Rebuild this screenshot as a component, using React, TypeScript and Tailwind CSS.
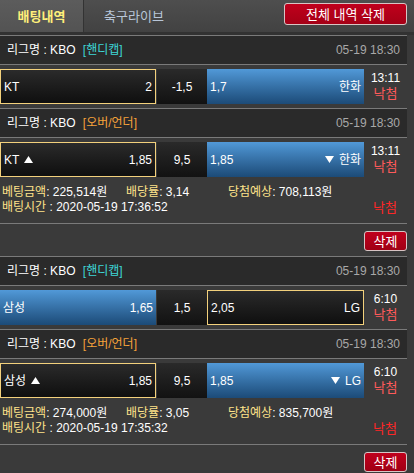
import React from 'react';

type Side = { name: string; odds: string; arrow?: 'up' | 'down'; blue: boolean };
type Game = { kind: 'handicap' | 'ou'; date: string; left: Side; mid: string; right: Side; time: string };
type Bet = { games: Game[]; amount: string; rate: string; expect: string; at: string };

const bets: Bet[] = [
  {
    games: [
      { kind: 'handicap', date: '05-19 18:30', left: { name: 'KT', odds: '2', blue: false }, mid: '-1,5', right: { name: '한화', odds: '1,7', blue: true }, time: '13:11' },
      { kind: 'ou', date: '05-19 18:30', left: { name: 'KT', odds: '1,85', arrow: 'up', blue: false }, mid: '9,5', right: { name: '한화', odds: '1,85', arrow: 'down', blue: true }, time: '13:11' },
    ],
    amount: '225,514원',
    rate: '3,14',
    expect: '708,113원',
    at: '2020-05-19 17:36:52',
  },
  {
    games: [
      { kind: 'handicap', date: '05-19 18:30', left: { name: '삼성', odds: '1,65', blue: true }, mid: '1,5', right: { name: 'LG', odds: '2,05', blue: false }, time: '6:10' },
      { kind: 'ou', date: '05-19 18:30', left: { name: '삼성', odds: '1,85', arrow: 'up', blue: false }, mid: '9,5', right: { name: 'LG', odds: '1,85', arrow: 'down', blue: true }, time: '6:10' },
    ],
    amount: '274,000원',
    rate: '3,05',
    expect: '835,700원',
    at: '2020-05-19 17:35:32',
  },
];

const boxDark = 'border border-[#f3d17c] bg-gradient-to-b from-[#2b2b2b] to-[#0f0f0f]';
const boxBlue = 'bg-gradient-to-b from-[#5199d8] to-[#1c4b78]';

function Arrow({ dir }: { dir: 'up' | 'down' }) {
  return (
    <svg width="9" height="7" viewBox="0 0 9 7" className="inline-block">
      {dir === 'up' ? <polygon points="4.5,0 9,7 0,7" fill="#fff" /> : <polygon points="0,0 9,0 4.5,7" fill="#fff" />}
    </svg>
  );
}

function Pick({ side, right }: { side: Side; right?: boolean }) {
  const cls = side.blue ? boxBlue : boxDark;
  return (
    <div className={`h-[35px] flex items-center justify-between px-[3px] text-white ${cls} ${right ? 'w-[157px]' : 'w-[156px]'}`}>
      {right ? (
        <>
          <span>{side.odds}</span>
          <span className="flex items-center gap-[5px]">
            {side.arrow && <Arrow dir={side.arrow} />}
            {side.name}
          </span>
        </>
      ) : (
        <>
          <span className="flex items-center gap-[5px]">
            {side.name}
            {side.arrow && <Arrow dir={side.arrow} />}
          </span>
          <span>{side.odds}</span>
        </>
      )}
    </div>
  );
}

function GameRows({ game }: { game: Game }) {
  return (
    <>
      <div className="h-[29px] border-t border-[#7a7a7a] bg-[#2a2a2a] flex items-center justify-between pl-[7px] pr-[7px]">
        <span className="text-white">
          리그명 : KBO{' '}
          {game.kind === 'handicap' ? (
            <span className="text-[#3ed6d6] ml-[4px]">[핸디캡]</span>
          ) : (
            <span className="text-[#f5a23a] ml-[4px]">[오버/언더]</span>
          )}
        </span>
        <span className="text-[#a8a8a8]">{game.date}</span>
      </div>
      <div className="border-t border-[#7a7a7a] pt-[4px] pb-[4px] flex">
        <Pick side={game.left} />
        <div className="w-[50px] ml-[1px] h-[35px] flex items-center justify-center text-white bg-gradient-to-b from-[#2a2a2a] to-[#121212]">
          {game.mid}
        </div>
        <Pick side={game.right} right />
        <div className="flex-1 flex flex-col items-center pt-[2px] leading-[15px]">
          <span className="text-white">{game.time}</span>
          <span className="text-[#ff5a5a] text-[13px]">낙첨</span>
        </div>
      </div>
    </>
  );
}

function BetBlock({ bet }: { bet: Bet }) {
  return (
    <div>
      {bet.games.map((g, i) => (
        <GameRows key={i} game={g} />
      ))}
      <div className="h-[42px] pt-[4px] pl-[2px] flex leading-[15px]">
        <div className="flex-1">
          <div className="flex">
            <span className="w-[124px]">
              <span className="text-[#ffe38a]">베팅금액</span>
              <span className="text-white">: {bet.amount}</span>
            </span>
            <span className="w-[102px]">
              <span className="text-[#ffe38a]">배당률</span>
              <span className="text-white">: {bet.rate}</span>
            </span>
            <span>
              <span className="text-[#ffe38a]">당첨예상</span>
              <span className="text-white">: {bet.expect}</span>
            </span>
          </div>
          <div>
            <span className="text-[#ffe38a]">배팅시간</span>
            <span className="text-white"> : {bet.at}</span>
          </div>
        </div>
        <div className="w-[44px] flex justify-center pt-[15px]">
          <span className="text-[#ff2626] text-[13px] leading-[15px]">낙첨</span>
        </div>
      </div>
      <div className="h-[33px] border-t border-[#7a7a7a] flex justify-end pt-[7px]">
        <button className="w-[43px] h-[20px] rounded-[3px] border border-[#d8c4c4] bg-gradient-to-b from-[#c0001c] to-[#a00015] text-white text-[13px] leading-none">
          삭제
        </button>
      </div>
    </div>
  );
}

export default function App() {
  return (
    <div
      className="w-[414px] h-[473px] overflow-hidden bg-[#3a3a3a] text-[12px] leading-[14px]"
      style={{ fontFamily: '"Liberation Sans", "Noto Sans CJK KR", sans-serif' }}
    >
      {/* Tabs */}
      <div className="h-[32px] flex bg-gradient-to-b from-[#4e4e4e] to-[#424242]">
        <div className="w-[84px] bg-gradient-to-b from-[#5c5c5c] to-[#535353] border-r border-[#333] flex items-center justify-center pt-[2px]">
          <span className="text-[#fff07a] font-bold text-[13px]">배팅내역</span>
        </div>
        <div className="w-[100px] flex items-center justify-center pt-[2px]">
          <span className="text-[#b8c6d8] text-[13px]">축구라이브</span>
        </div>
        <div className="ml-auto mr-[7px] mt-[3px]">
          <button className="w-[123px] h-[22px] rounded-[3px] border border-[#d8c4c4] bg-gradient-to-b from-[#c0001c] to-[#a50016] text-white text-[13px] leading-none">
            전체 내역 삭제
          </button>
        </div>
      </div>
      <div className="h-[3px] bg-[#323232]" />
      <div className="w-[407px]">
        {bets.map((b, i) => (
          <BetBlock key={i} bet={b} />
        ))}
      </div>
    </div>
  );
}
